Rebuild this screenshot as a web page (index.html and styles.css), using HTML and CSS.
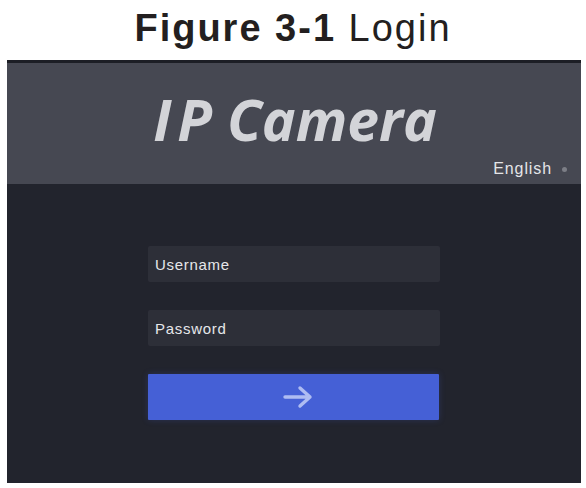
FILE: index.html
```html
<!DOCTYPE html>
<html lang="en">
<head>
  <meta charset="UTF-8">
  <title>Figure 3-1 Login</title>
  <link rel="stylesheet" href="styles.css">
</head>
<body>
  <h1 class="caption"><b>Figure 3-1</b> Login</h1>

  <div class="screen">
    <div class="top-bar">
      <div class="logo"><span class="logo-i">I</span>P Camera</div>
      <div class="lang">English <span class="lang-dot"></span></div>
    </div>

    <div class="login">
      <form class="login-form">
        <input type="text" class="field" placeholder="Username">
        <input type="password" class="field" placeholder="Password">
        <button type="button" class="go">
          <svg width="32" height="24" viewBox="0 0 32 24">
            <path d="M3 12 H28 M18 3 L28 12 L18 21" fill="none" stroke="#aebcf2" stroke-width="3.4" stroke-linecap="round" stroke-linejoin="round"/>
          </svg>
        </button>
      </form>
    </div>
  </div>
</body>
</html>
```

FILE: styles.css
```css
body {
  margin: 0;
  background: #fff;
  font-family: "Liberation Sans", Arial, sans-serif;
}

.caption {
  margin: 0;
  height: 60px;
  padding-top: 6px;
  box-sizing: border-box;
  text-align: center;
  font-size: 38px;
  font-weight: normal;
  letter-spacing: 2px;
  color: #231f20;
  line-height: 44px;
}

.caption b {
  font-weight: bold;
}

.screen {
  margin-left: 7px;
  width: 574px;
  height: 423px;
  background: #22242d;
  display: flex;
  flex-direction: column;
}

.top-bar {
  height: 121px;
  border-top: 3px solid #1c1e25;
  background: #464852;
  display: flex;
  flex-direction: column;
  align-items: center;
}

.logo {
  margin-top: 21px;
  margin-left: 2px;
  font-family: "Open Sans", sans-serif;
  font-style: italic;
  font-weight: bold;
  font-size: 57px;
  line-height: 70px;
  color: #d3d4d8;
}

.logo-i {
  margin-right: 6px;
}

.lang {
  align-self: flex-end;
  margin-top: 6px;
  margin-right: 14px;
  font-size: 16px;
  letter-spacing: 0.9px;
  color: #e4e5e8;
  display: flex;
  align-items: center;
}

.lang-dot {
  width: 5px;
  height: 5px;
  border-radius: 50%;
  background: #7c7e86;
  margin-left: 10px;
}

.login {
  flex: 1;
  display: flex;
  justify-content: center;
}

.login-form {
  width: 292px;
  margin-top: 62px;
  display: flex;
  flex-direction: column;
}

.field {
  height: 36px;
  margin: 0 0 28px 0;
  padding: 0 7px;
  border: none;
  border-radius: 2px;
  background: #2d2f38;
  font-family: "Liberation Sans", Arial, sans-serif;
  font-size: 15px;
  letter-spacing: 0.7px;
  color: #e6e7ea;
  outline: none;
}

.field::placeholder {
  color: #e6e7ea;
}

.go {
  height: 46px;
  width: 291px;
  border: none;
  border-radius: 1px;
  background: #4560d6;
  box-shadow: 0 0 6px rgba(70, 96, 214, 0.25);
  display: flex;
  align-items: center;
  justify-content: center;
  padding: 0;
  padding-left: 8px;
  cursor: pointer;
}
```
